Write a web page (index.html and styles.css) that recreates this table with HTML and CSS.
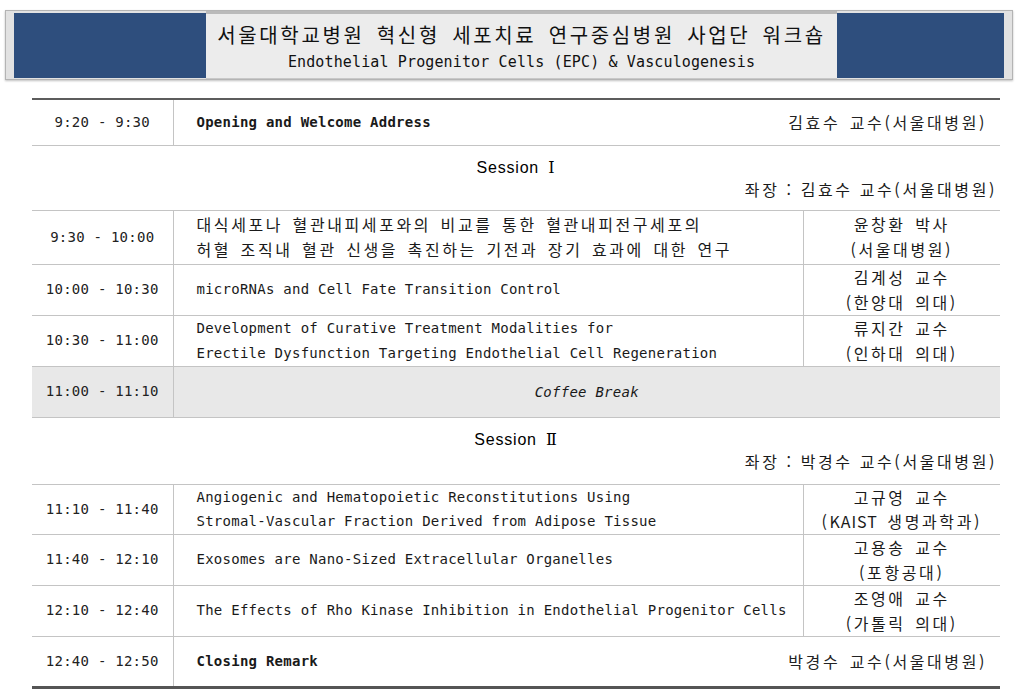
FILE: index.html
```html
<!DOCTYPE html>
<html lang="ko">
<head>
<meta charset="utf-8">
<title>서울대학교병원 혁신형 세포치료 연구중심병원 사업단 워크숍</title>
<link rel="stylesheet" href="styles.css">
</head>
<body>
<header class="banner">
  <div class="blue blue-left"></div>
  <div class="title-panel">
    <h1 class="title">서울대학교병원 혁신형 세포치료 연구중심병원 사업단 워크숍</h1>
    <p class="subtitle">Endothelial Progenitor Cells (EPC) &amp; Vasculogenesis</p>
  </div>
  <div class="blue blue-right"></div>
</header>

<table class="program">
  <colgroup><col class="c-time"><col class="c-topic"><col class="c-spk"></colgroup>
  <tr class="h47">
    <td class="time">9:20 - 9:30</td>
    <td class="topic" colspan="2"><div class="split"><b>Opening and Welcome Address</b><span class="ko host">김효수 교수(서울대병원)</span></div></td>
  </tr>
  <tr class="session h65">
    <td colspan="3"><div class="s-title">Session <span class="roman">Ⅰ</span></div><div class="chair ko">좌장 : 김효수 교수(서울대병원)</div></td>
  </tr>
  <tr class="h54">
    <td class="time">9:30 - 10:00</td>
    <td class="topic ko">대식세포나 혈관내피세포와의 비교를 통한 혈관내피전구세포의<br>허혈 조직내 혈관 신생을 촉진하는 기전과 장기 효과에 대한 연구</td>
    <td class="spk ko">윤창환 박사<br>(서울대병원)</td>
  </tr>
  <tr class="h51">
    <td class="time">10:00 - 10:30</td>
    <td class="topic">microRNAs and Cell Fate Transition Control</td>
    <td class="spk ko">김계성 교수<br>(한양대 의대)</td>
  </tr>
  <tr class="h51">
    <td class="time">10:30 - 11:00</td>
    <td class="topic">Development of Curative Treatment Modalities for<br>Erectile Dysfunction Targeting Endothelial Cell Regeneration</td>
    <td class="spk ko">류지간 교수<br>(인하대 의대)</td>
  </tr>
  <tr class="break h51">
    <td class="time">11:00 - 11:10</td>
    <td class="coffee" colspan="2">Coffee Break</td>
  </tr>
  <tr class="session h67">
    <td colspan="3"><div class="s-title">Session <span class="roman">Ⅱ</span></div><div class="chair ko">좌장 : 박경수 교수(서울대병원)</div></td>
  </tr>
  <tr class="h50">
    <td class="time">11:10 - 11:40</td>
    <td class="topic">Angiogenic and Hematopoietic Reconstitutions Using<br>Stromal-Vascular Fraction Derived from Adipose Tissue</td>
    <td class="spk ko">고규영 교수<br>(<span class="latin">KAIST</span> 생명과학과)</td>
  </tr>
  <tr class="h51">
    <td class="time">11:40 - 12:10</td>
    <td class="topic">Exosomes are Nano-Sized Extracellular Organelles</td>
    <td class="spk ko">고용송 교수<br>(포항공대)</td>
  </tr>
  <tr class="h51">
    <td class="time">12:10 - 12:40</td>
    <td class="topic">The Effects of Rho Kinase Inhibition in Endothelial Progenitor Cells</td>
    <td class="spk ko">조영애 교수<br>(가톨릭 의대)</td>
  </tr>
  <tr class="h51">
    <td class="time">12:40 - 12:50</td>
    <td class="topic" colspan="2"><div class="split"><b>Closing Remark</b><span class="ko host">박경수 교수(서울대병원)</span></div></td>
  </tr>
</table>
</body>
</html>
```

FILE: styles.css
```css
* { box-sizing: border-box; }

body {
  margin: 0;
  background: #ffffff;
  color: #1a1a1a;
  font-family: "DejaVu Sans Mono", "Noto Sans CJK KR", monospace;
}

/* ---------- banner ---------- */
.banner {
  display: flex;
  height: 70px;
  margin: 10px 10px 0 5px;
  padding: 0 8px;
  background: #e2e2e2;
  border: 1px solid #b4b4b4;
  box-shadow: 0 1px 2px rgba(0, 0, 0, 0.25);
}

.blue {
  margin: 2px 0 1px;
  background: #2e4e7d;
}
.blue-left { width: 192px; }
.blue-right { width: 167px; }

.title-panel {
  width: 631px;
  display: flex;
  flex-direction: column;
  align-items: center;
  background: #ececec;
  border-top: 3px solid #bababa;
  border-bottom: 1px solid #c8c8c8;
}

.title {
  margin: 8px 0 0;
  font: 400 20px/26px "Noto Sans CJK KR", sans-serif;
  letter-spacing: 2.65px;
  word-spacing: 4px;
  color: #111;
}

.subtitle {
  margin: 2px 0 0;
  font: 400 15px/24px "DejaVu Sans Mono", monospace;
  letter-spacing: 0.13px;
  color: #111;
}

/* ---------- program table ---------- */
.program {
  width: 968px;
  margin: 18px 0 0 32px;
  border-collapse: collapse;
  table-layout: fixed;
  border-top: 2px solid #5c5c5c;
  border-bottom: 3px solid #555;
  font-size: 14px;
  letter-spacing: 0.25px;
}

.c-time { width: 141px; }
.c-topic { width: 630px; }
.c-spk { width: 197px; }

.program td {
  padding: 0;
  border-bottom: 1px solid #c4c4c4;
  vertical-align: middle;
  line-height: 25px;
  white-space: nowrap;
}

.h47 td { height: 46px; }
.h50 td { height: 49px; line-height: 24.5px; }
.h51 td { height: 51px; }
.h54 td { height: 54px; }
.h65 td { height: 65px; }
.h67 td { height: 67px; }

.program td.time {
  text-align: center;
  border-right: 1px solid #c4c4c4;
  color: #222;
}

.program td.topic { padding-left: 23px; }

.program td.spk {
  text-align: center;
  border-left: 1px solid #c4c4c4;
}

.split {
  display: flex;
  justify-content: space-between;
  align-items: center;
  padding-right: 13px;
}

.ko {
  font-family: "Noto Sans CJK KR", sans-serif;
  font-size: 16px;
  letter-spacing: 2.6px;
  word-spacing: 2.4px;
}

.program td.ko { font-size: 16px; letter-spacing: 2.6px; }

.latin { letter-spacing: 1px; }

.host { color: #222; line-height: 25px; }

.program td.coffee {
  padding-top: 2px;
  text-align: center;
  font-style: italic;
}

.break td { background: #e8e8e8; }

.session td { vertical-align: top; }

.s-title {
  margin-top: 12px;
  text-align: center;
  font: 400 16px/20px "Liberation Sans", "Noto Sans CJK KR", sans-serif;
  letter-spacing: 0.8px;
  color: #000;
}

.roman {
  margin-left: 4px;
  font-family: "DejaVu Serif", "Noto Sans CJK KR", serif;
}

.chair {
  padding-right: 3px;
  text-align: right;
  line-height: 22px;
  word-spacing: 0;
}
```
